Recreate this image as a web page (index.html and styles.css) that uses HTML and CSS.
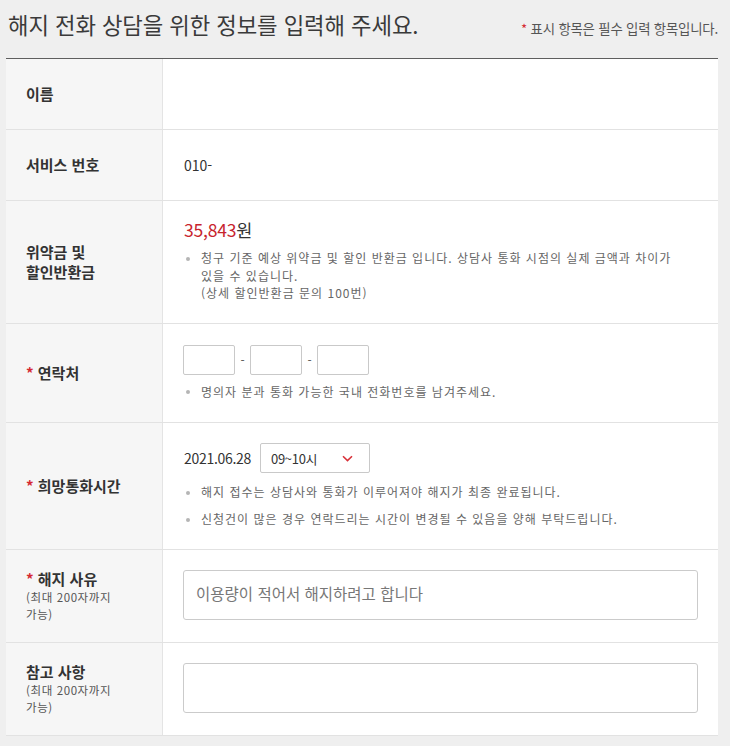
FILE: index.html
```html
<!DOCTYPE html>
<html lang="ko">
<head>
<meta charset="utf-8">
<title>해지 전화 상담</title>
<link rel="stylesheet" href="styles.css">
</head>
<body>
<div class="page">
  <div class="head">
    <h2 class="title">해지 전화 상담을 위한 정보를 입력해 주세요.</h2>
    <p class="req"><span class="star">*</span> 표시 항목은 필수 입력 항목입니다.</p>
  </div>
  <div class="form">
    <div class="row r-short">
      <div class="label">이름</div>
      <div class="value"></div>
    </div>
    <div class="row r-short">
      <div class="label">서비스 번호</div>
      <div class="value"><span class="plain">010-</span></div>
    </div>
    <div class="row">
      <div class="label two">위약금 및<br>할인반환금</div>
      <div class="value v-fee">
        <div class="amount"><span class="num">35,843</span>원</div>
        <ul class="notes">
          <li>청구 기준 예상 위약금 및 할인 반환금 입니다. 상담사 통화 시점의 실제 금액과 차이가<br>있을 수 있습니다.<br>(상세 할인반환금 문의 100번)</li>
        </ul>
      </div>
    </div>
    <div class="row">
      <div class="label"><span><span class="star">*</span> 연락처</span></div>
      <div class="value v-phone">
        <div class="phone">
          <span class="box"></span><span class="dash">-</span><span class="box"></span><span class="dash">-</span><span class="box"></span>
        </div>
        <ul class="notes">
          <li>명의자 분과 통화 가능한 국내 전화번호를 남겨주세요.</li>
        </ul>
      </div>
    </div>
    <div class="row">
      <div class="label"><span><span class="star">*</span> 희망통화시간</span></div>
      <div class="value v-time">
        <div class="when">
          <span class="date">2021.06.28</span>
          <span class="select"><span>09~10시</span>
            <svg class="chev" width="11" height="7" viewBox="0 0 11 7"><path d="M1 1.2 L5.5 5.6 L10 1.2" fill="none" stroke="#d8323a" stroke-width="1.6"/></svg>
          </span>
        </div>
        <ul class="notes spaced">
          <li>해지 접수는 상담사와 통화가 이루어져야 해지가 최종 완료됩니다.</li>
          <li>신청건이 많은 경우 연락드리는 시간이 변경될 수 있음을 양해 부탁드립니다.</li>
        </ul>
      </div>
    </div>
    <div class="row">
      <div class="label stack">
        <span class="ltitle"><span class="star">*</span> 해지 사유</span>
        <span class="lsub">(최대 200자까지<br>가능)</span>
      </div>
      <div class="value v-area">
        <div class="area"><span class="ph">이용량이 적어서 해지하려고 합니다</span></div>
      </div>
    </div>
    <div class="row">
      <div class="label stack">
        <span class="ltitle">참고 사항</span>
        <span class="lsub">(최대 200자까지<br>가능)</span>
      </div>
      <div class="value v-area">
        <div class="area"></div>
      </div>
    </div>
  </div>
</div>
</body>
</html>
```
FILE: styles.css
```css
* { box-sizing: border-box; }
html, body { margin: 0; padding: 0; }
body {
  background: #efefef;
  font-family: "Noto Sans CJK KR", "Noto Sans", sans-serif;
  color: #333;
}
.page {
  width: 712px;
  margin-left: 6px;
}
.head {
  height: 58px;
  display: flex;
  justify-content: space-between;
  align-items: baseline;
  padding-top: 9px;
}
.title {
  margin: 0 0 0 2px;
  font-size: 22.3px;
  font-weight: 400;
  line-height: 30px;
  color: #3a3a3a;
  letter-spacing: -0.1px;
}
.req {
  margin: 0;
  font-size: 13.4px;
  color: #555;
  letter-spacing: -0.2px;
}
.star { color: #d52a33; }
.form {
  border-top: 1px solid #5e5e5e;
  background: #fff;
}
.row {
  display: grid;
  grid-template-columns: 157px 1fr;
  border-bottom: 1px solid #e2e2e2;
}
.label {
  background: #f6f6f6;
  border-right: 1px solid #e4e4e4;
  padding-left: 20px;
  display: flex;
  align-items: center;
  font-size: 15px;
  font-weight: 700;
  line-height: 18px;
  color: #333;
}
.label.two { line-height: 20px; }
.label.stack {
  flex-direction: column;
  align-items: flex-start;
  justify-content: center;
}
.ltitle { line-height: 21px; }
.lsub {
  margin-top: 0;
  font-size: 11.5px;
  font-weight: 400;
  line-height: 16.7px;
  color: #555;
  letter-spacing: 0.6px;
}
.value {
  padding: 0 20px 0 21px;
}
.r-short .value {
  height: 70px;
  display: flex;
  align-items: center;
}
.plain { font-size: 14px; color: #333; }
.v-fee { padding-top: 19px; padding-bottom: 21px; }
.amount {
  font-size: 17.5px;
  line-height: 20px;
  color: #333;
  letter-spacing: -0.2px;
}
.amount .num { color: #c8242d; }
.notes {
  list-style: none;
  margin: 9px 0 0;
  padding: 0;
}
.notes li {
  position: relative;
  padding-left: 17px;
  font-size: 12px;
  line-height: 17.5px;
  color: #666;
  letter-spacing: 1px;
}
.notes li::before {
  content: "";
  position: absolute;
  left: 2px;
  top: 7.5px;
  width: 4px;
  height: 4px;
  border-radius: 50%;
  background: #b5b5b5;
}
.notes.spaced li + li { margin-top: 9.5px; }
.v-phone { padding-top: 21px; padding-bottom: 22px; }
.phone { display: flex; align-items: center; height: 30px; margin-left: -1px; }
.box {
  width: 52px;
  height: 30px;
  border: 1px solid #c9c9c9;
  border-radius: 2px;
  background: #fff;
}
.dash {
  width: 15px;
  text-align: center;
  font-size: 12px;
  color: #555;
}
.v-phone .notes { margin-top: 8px; }
.v-time { padding-top: 20px; padding-bottom: 21px; }
.when { display: flex; align-items: center; height: 30px; }
.date { font-size: 14px; color: #333; letter-spacing: -0.3px; margin-right: 9px; }
.select {
  width: 110px;
  height: 30px;
  border: 1px solid #c9c9c9;
  border-radius: 2px;
  display: flex;
  align-items: center;
  justify-content: space-between;
  padding: 0 16px 0 10px;
  font-size: 13px;
  color: #333;
  letter-spacing: -0.3px;
}
.v-time .notes { margin-top: 10px; }
.v-area { padding-top: 20px; padding-bottom: 22px; padding-right: 20px; }
.area {
  height: 50px;
  border: 1px solid #cbcbcb;
  border-radius: 3px;
  margin-left: -1px;
  padding: 10px 12px 0 12px;
}
.ph {
  font-size: 15.5px;
  line-height: 20px;
  color: #777;
}
```
